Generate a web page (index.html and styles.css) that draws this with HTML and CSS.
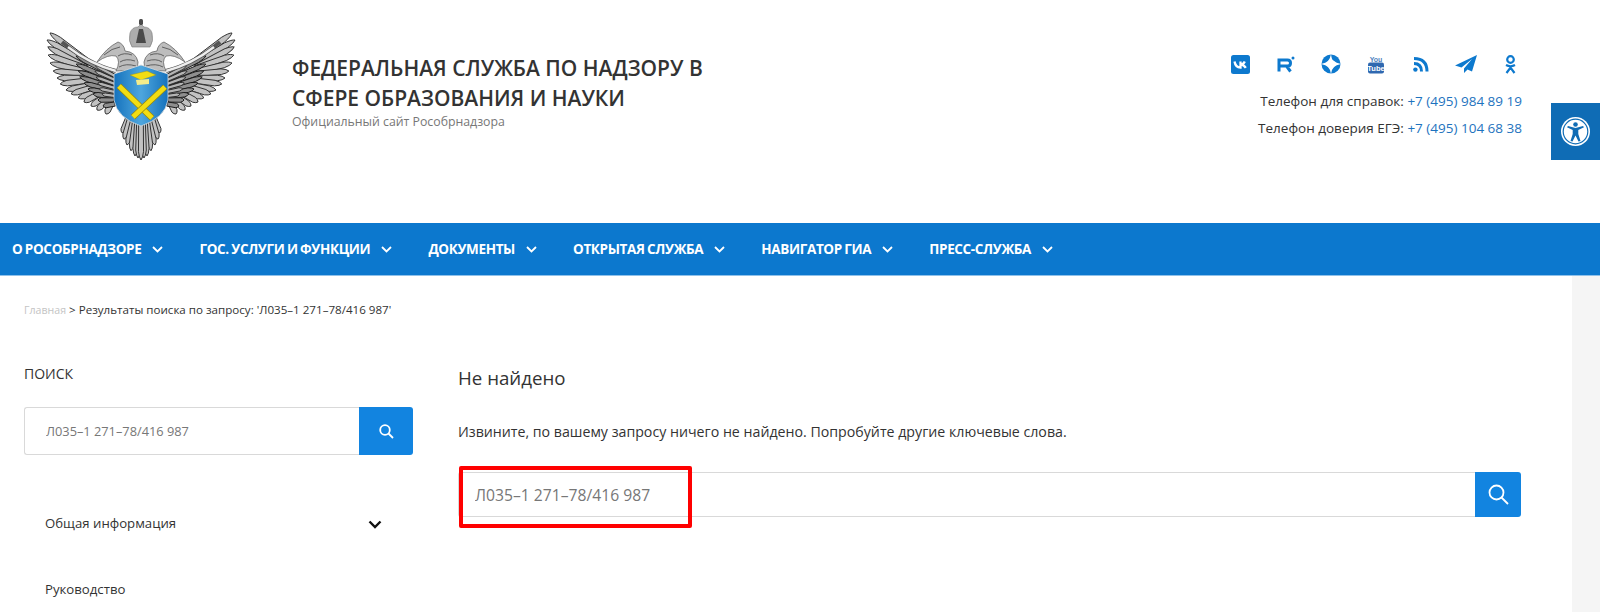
FILE: index.html
```html
<!DOCTYPE html>
<html lang="ru">
<head>
  <meta charset="UTF-8" />
  <title>Рособрнадзор - Поиск</title>
  <link rel="stylesheet" href="styles.css">
</head>
<body>
  <header class="header">
    <svg class="logo" viewBox="40 15 200 150" aria-label="Герб">
      <defs>
        <linearGradient id="shieldFill" x1="0" x2="1" y1="0" y2="0">
          <stop offset="0" stop-color="#1572bd" />
          <stop offset="0.5" stop-color="#4ea6dd" />
          <stop offset="1" stop-color="#1572bd" />
        </linearGradient>
        <path id="fe" d="M0 -2.6 L78 -2.8 Q95 -2 100 0 Q95 2 78 2.8 L0 2.6 Z" />
        <g id="primaries">
          <use href="#fe" transform="translate(90 63) rotate(216.9) scale(.5 1)" />
          <use href="#fe" transform="translate(88 64) rotate(210.3) scale(.475 1)" />
          <use href="#fe" transform="translate(86 67) rotate(207.8) scale(.43 1)" />
          <use href="#fe" transform="translate(86 68) rotate(198.9) scale(.4 1)" />
          <use href="#fe" transform="translate(88 72) rotate(193.3) scale(.39 1)" />
          <use href="#fe" transform="translate(88 74) rotate(184.9) scale(.35 1)" />
          <use href="#fe" transform="translate(92 78) rotate(180) scale(.35 1)" />
          <use href="#fe" transform="translate(92 80) rotate(172.9) scale(.32 1)" />
          <use href="#fe" transform="translate(97 84) rotate(169) scale(.316 1)" />
          <use href="#fe" transform="translate(97 86) rotate(162.9) scale(.27 1)" />
          <use href="#fe" transform="translate(102 90) rotate(161.6) scale(.25 1)" />
          <use href="#fe" transform="translate(102 92) rotate(151) scale(.206 1)" />
          <use href="#fe" transform="translate(107 95) rotate(145.5) scale(.194 1)" />
          <use href="#fe" transform="translate(110 98) rotate(137.3) scale(.177 1)" />
          <use href="#fe" transform="translate(113 100) rotate(116.6) scale(.157 1)" />
        </g>
        <g id="coverts">
          <use href="#fe" transform="translate(114 76) rotate(207.8) scale(.43 .8)" />
          <use href="#fe" transform="translate(114 80) rotate(202.8) scale(.41 .8)" />
          <use href="#fe" transform="translate(114 84) rotate(199.9) scale(.38 .8)" />
          <use href="#fe" transform="translate(114 88) rotate(197.9) scale(.36 .8)" />
          <use href="#fe" transform="translate(114 91) rotate(194.9) scale(.31 .8)" />
          <use href="#fe" transform="translate(114 94) rotate(190.9) scale(.265 .8)" />
          <use href="#fe" transform="translate(114 97) rotate(188.1) scale(.21 .8)" />
          <use href="#fe" transform="translate(114 100) rotate(180) scale(.16 .8)" />
          <use href="#fe" transform="translate(115 104) rotate(170.5) scale(.12 .8)" />
        </g>
        <g id="inner">
          <use href="#fe" transform="translate(115 76) rotate(208) scale(.22 .6)" />
          <use href="#fe" transform="translate(115 80) rotate(204) scale(.22 .6)" />
          <use href="#fe" transform="translate(115 84) rotate(200) scale(.2 .6)" />
          <use href="#fe" transform="translate(115 88) rotate(196) scale(.18 .6)" />
          <use href="#fe" transform="translate(115 92) rotate(192) scale(.16 .6)" />
          <use href="#fe" transform="translate(115 96) rotate(188) scale(.13 .6)" />
        </g>
        <g id="tail">
          <use href="#fe" transform="translate(128 118) rotate(111.8) scale(.16 .9)" />
          <use href="#fe" transform="translate(130 118) rotate(105.9) scale(.22 .9)" />
          <use href="#fe" transform="translate(133 120) rotate(103.5) scale(.257 .9)" />
          <use href="#fe" transform="translate(135 120) rotate(97.4) scale(.31 .9)" />
          <use href="#fe" transform="translate(137 122) rotate(93.4) scale(.34 .9)" />
          <use href="#fe" transform="translate(139 122) rotate(91.6) scale(.36 .9)" />
        </g>
        <g id="side">
          <use href="#primaries" class="primary" />
          <use href="#coverts" class="covert" />
          <use href="#inner" class="inner" />
          <use href="#tail" class="primary" />
          <path class="arm-edge" d="M62 42 Q88 64 116 71" />
          <path class="arm" d="M68 47 Q90 64 116 71" />
          <path class="head" d="M97 62 Q106 48 118 42 Q124 44 125 51 Q136 52 138 62 L137 70 L116 71 Q121 61 116 56 Q108 54 97 62 Z" />
          <path class="head-line" d="M104 55 Q112 48 120 47 M118 56 Q124 52 132 55 M120 62 Q126 58 135 61 M119 67 Q126 63 136 66" />
        </g>
      </defs>
      <use href="#side" />
      <use href="#side" transform="translate(282 0) scale(-1 1)" />
      <use href="#fe" class="primary" transform="translate(141 122) rotate(90) scale(.38 .9)" />
      <path class="crown" d="M130 33 Q132 27 138 27 L141 24 L144 27 Q150 27 152 33 Q154 41 150 47 L132 47 Q128 41 130 33 Z" />
      <rect class="crown-dark" x="139" y="19" width="4" height="6" rx="1.5" />
      <path class="crown-dark" d="M139 29 L143 29 L146 43 L136 43 Z" />
      <path class="shield" d="M114 74 L141 65 L168 74 L168 100 Q165 118 141 126 Q117 118 114 100 Z" />
      <line class="rod-edge" x1="119" y1="86" x2="152" y2="118" />
      <line class="rod" x1="119" y1="86" x2="152" y2="118" />
      <line class="rod-edge" x1="165" y1="87" x2="133" y2="117" />
      <line class="rod" x1="165" y1="87" x2="133" y2="117" />
      <path class="cap" d="M130 75 L147 71 L156 75 L141 80 Z" />
      <path class="cap-base" d="M136 80 L149 79 L149 84 L137 85 Z" />
    </svg>
    <div class="brand">
      <h1 class="brand-title">ФЕДЕРАЛЬНАЯ СЛУЖБА ПО НАДЗОРУ В<br>СФЕРЕ ОБРАЗОВАНИЯ И НАУКИ</h1>
      <p class="brand-sub">Официальный сайт Рособрнадзора</p>
    </div>
    <div class="contacts">
      <div class="socials">
        <a class="social">
          <svg width="19" height="19" viewBox="0 0 19 19"><rect class="ico-fill" width="19" height="19" rx="2.5" /><path class="vk-mark" d="M3.5 6.5 Q4.5 12.5 9.5 12.6 L9.5 6.5 M9.5 9.6 Q12.5 9.4 13.8 6.5 M9.5 9.4 Q13 9.8 14.8 12.8" /></svg>
        </a>
        <a class="social">
          <svg width="18" height="17" viewBox="0 0 18 17"><path class="ico-stroke" d="M2 15.5 V4 H10.5 Q13.5 4 13.5 7 Q13.5 10 10.5 10 H2.5 M9.5 10 L13.5 15.5" /><circle class="ico-fill" cx="16" cy="2" r="1.5" /></svg>
        </a>
        <a class="social">
          <svg width="20" height="20" viewBox="0 0 20 20"><circle class="ico-fill" cx="10" cy="10" r="9.5" /><path class="ico-white" d="M10 0 Q10.8 7 13 7 Q15 9.2 20 10 Q15 10.8 13 13 Q10.8 15 10 20 Q9.2 15 7 13 Q5 10.8 0 10 Q5 9.2 7 7 Q9.2 5 10 0 Z" /><circle class="ico-white" cx="10" cy="10" r="4" /></svg>
        </a>
        <a class="social">
          <svg width="16" height="19" viewBox="0 0 16 19"><text class="yt-you" x="8" y="6.5">You</text><rect class="yt-box" y="7.5" width="16" height="11" rx="2" /><text class="yt-tube" x="8" y="15.8">Tube</text></svg>
        </a>
        <a class="social">
          <svg width="16" height="15" viewBox="0 0 16 15"><circle class="ico-fill" cx="2.4" cy="12.6" r="2.2" /><path class="ico-stroke" d="M1 6.5 Q8.5 6.5 8.5 14.5 M1 1.5 Q14 1.5 14 14.5" /></svg>
        </a>
        <a class="social">
          <svg width="22" height="18" viewBox="0 0 22 18"><path class="ico-fill" d="M22 0 L0 10.5 L6.5 12.5 L17 4 L9 13.5 L9 18 L12.5 14.5 L17 16.5 Z" /></svg>
        </a>
        <a class="social">
          <svg width="11" height="19" viewBox="0 0 11 19"><circle class="ok-stroke" cx="5.5" cy="4.5" r="3.3" /><path class="ok-stroke" d="M1 10 Q5.5 12.5 10 10 M5.5 11 V12 M1.5 18 L5.5 12.5 L9.5 18" /></svg>
        </a>
      </div>
      <p class="phone">Телефон для справок: <a class="phone-link">+7 (495) 984 89 19</a></p>
      <p class="phone">Телефон доверия ЕГЭ: <a class="phone-link">+7 (495) 104 68 38</a></p>
    </div>
  </header>

  <nav class="nav">
    <a class="nav-item">О РОСОБРНАДЗОРЕ <svg class="nav-arrow" viewBox="0 0 11 7"><path d="M1 1 L5.5 5.5 L10 1" /></svg></a>
    <a class="nav-item">ГОС. УСЛУГИ И ФУНКЦИИ <svg class="nav-arrow" viewBox="0 0 11 7"><path d="M1 1 L5.5 5.5 L10 1" /></svg></a>
    <a class="nav-item">ДОКУМЕНТЫ <svg class="nav-arrow" viewBox="0 0 11 7"><path d="M1 1 L5.5 5.5 L10 1" /></svg></a>
    <a class="nav-item">ОТКРЫТАЯ СЛУЖБА <svg class="nav-arrow" viewBox="0 0 11 7"><path d="M1 1 L5.5 5.5 L10 1" /></svg></a>
    <a class="nav-item">НАВИГАТОР ГИА <svg class="nav-arrow" viewBox="0 0 11 7"><path d="M1 1 L5.5 5.5 L10 1" /></svg></a>
    <a class="nav-item">ПРЕСС-СЛУЖБА <svg class="nav-arrow" viewBox="0 0 11 7"><path d="M1 1 L5.5 5.5 L10 1" /></svg></a>
  </nav>

  <div class="content">
    <p class="crumbs"><a class="crumb-home">Главная</a> &gt; Результаты поиска по запросу: 'Л035–1 271–78/416 987'</p>
    <div class="columns">
      <aside class="sidebar">
        <h3 class="side-title">ПОИСК</h3>
        <form class="search search-small">
          <input class="search-input" value="Л035–1 271–78/416 987" />
          <button class="search-btn" type="button">
            <svg width="15" height="15" viewBox="0 0 15 15"><circle class="glass" cx="6" cy="6" r="4.8" /><path class="glass" d="M9.5 9.5 L14 14" /></svg>
          </button>
        </form>
        <ul class="side-menu">
          <li class="side-item">Общая информация
            <svg class="side-arrow" viewBox="0 0 14 9"><path d="M1.5 1.5 L7 7 L12.5 1.5" /></svg>
          </li>
          <li class="side-item">Руководство</li>
        </ul>
      </aside>
      <main class="main">
        <h2 class="main-title">Не найдено</h2>
        <p class="main-text">Извините, по вашему запросу ничего не найдено. Попробуйте другие ключевые слова.</p>
        <form class="search search-big">
          <input class="search-input" value="Л035–1 271–78/416 987" />
          <button class="search-btn" type="button">
            <svg width="21" height="21" viewBox="0 0 21 21"><circle class="glass" cx="8.5" cy="8.5" r="7" /><path class="glass" d="M13.5 13.5 L20 20" /></svg>
          </button>
          <div class="annotation"></div>
        </form>
      </main>
    </div>
  </div>

  <a class="a11y">
    <svg width="29" height="29" viewBox="0 0 29 29">
      <circle class="a11y-disc" cx="14.5" cy="14.5" r="14.5" />
      <circle class="a11y-ring" cx="14.5" cy="14.5" r="12.3" />
      <circle class="a11y-man" cx="14.5" cy="7.5" r="2.3" />
      <path class="a11y-man" d="M6 10.3 L7 9 L14.5 11 L22 9 L23 10.3 L17.3 13 L17.3 17 L19.5 24 L17.5 24.5 L14.5 18.5 L11.5 24.5 L9.5 24 L11.7 17 L11.7 13 Z" />
    </svg>
  </a>
</body>
</html>
```

FILE: styles.css
```css
html, body {
  margin: 0;
  height: 612px;
  overflow: hidden;
}
body {
  background-color: #f5f5f5;
  font-family: "Open Sans", Arial, sans-serif;
  color: #333;
}
p, h1, h2, h3, ul {
  margin: 0;
  padding: 0;
}

/* header */
.header {
  display: flex;
  height: 223px;
  background: #fff;
  box-sizing: border-box;
  padding: 15px 66px 0 40px;
}
.logo {
  width: 200px;
  height: 150px;
  flex: none;
  filter: blur(0.4px);
}
.brand {
  margin-left: 52px;
  padding-top: 38px;
}
.brand-title {
  font-size: 21px;
  line-height: 30px;
  font-weight: 600;
  color: #333;
}
.brand-sub {
  font-size: 12.3px;
  line-height: 18px;
  color: #777;
}
.contacts {
  margin-left: auto;
  padding-top: 39px;
  text-align: right;
}
.socials {
  display: flex;
  margin: 0 1px 14px 0;
}
.social {
  width: 45px;
  height: 20px;
  display: flex;
  align-items: center;
  justify-content: center;
}
.phone {
  font-size: 13.5px;
  line-height: 26.5px;
  padding-right: 12px;
}
.phone-link {
  color: #1e73be;
}

/* social icons */
.ico-fill { fill: #0d79ce; }
.ico-white { fill: #fff; }
.ico-stroke { fill: none; stroke: #0d79ce; stroke-width: 3; }
.vk-mark { fill: none; stroke: #fff; stroke-width: 2.3; }
.ok-stroke { fill: none; stroke: #0d79ce; stroke-width: 2.2; }
.yt-you { font: bold 7px "Liberation Sans", sans-serif; fill: #4e7fc0; text-anchor: middle; }
.yt-box { fill: #2f68b0; }
.yt-tube { font: bold 7.5px "Liberation Sans", sans-serif; fill: #fff; text-anchor: middle; }

/* logo parts */
#fe { vector-effect: non-scaling-stroke; }
.primary { fill: #c2c2c2; stroke: #333; stroke-width: 1; }
.covert { fill: #8e8e8e; stroke: #1c1c1c; stroke-width: 1; }
.inner { fill: #b4b4b4; stroke: #222; stroke-width: 0.9; }
.arm-edge { fill: none; stroke: #555; stroke-width: 4; }
.arm { fill: none; stroke: #eee; stroke-width: 2.4; }
.head { fill: #bdbdbd; stroke: #666; stroke-width: 0.8; }
.head-line { fill: none; stroke: #555; stroke-width: 0.9; }
.crown { fill: #adadad; stroke: #777; stroke-width: 0.6; }
.crown-dark { fill: #4a4a4a; }
.shield { fill: url(#shieldFill); stroke: #d8d8d8; stroke-width: 0.8; }
.rod-edge { stroke: #94890f; stroke-width: 6.4; }
.rod { stroke: #f2dd12; stroke-width: 4.8; }
.cap { fill: #f2dd12; stroke: #94890f; stroke-width: 0.4; }
.cap-base { fill: #f5ec8a; }

/* nav */
.nav {
  display: flex;
  gap: 36px;
  height: 53px;
  align-items: center;
  padding-left: 12px;
  background: #0c78ce;
  border-bottom: 1px solid #8fc1ea;
  box-sizing: border-box;
}
.nav-item {
  display: flex;
  align-items: center;
  gap: 11px;
  font-size: 13.5px;
  font-weight: 700;
  letter-spacing: -0.35px;
  word-spacing: -0.7px;
  color: #fff;
  white-space: nowrap;
}
.nav-arrow {
  width: 11px;
  height: 7px;
}
.nav-arrow path {
  fill: none;
  stroke: #fff;
  stroke-width: 1.8;
}

/* content */
.content {
  width: 1572px;
  height: 336px;
  background: #fff;
  box-sizing: border-box;
  padding: 26px 0 0 24px;
}
.crumbs {
  font-size: 11.6px;
  line-height: 16px;
  color: #333;
}
.crumb-home {
  font-size: 10.6px;
  color: #c4c4c4;
}
.columns {
  display: flex;
  margin-top: 46px;
}
.sidebar {
  width: 389px;
  flex: none;
}
.side-title {
  font-size: 14px;
  font-weight: 400;
  line-height: 20px;
  color: #333;
}
.search {
  position: relative;
  display: flex;
}
.search-input {
  flex: 1;
  min-width: 0;
  box-sizing: border-box;
  height: 100%;
  border: 1px solid #d9d9d9;
  border-right: 0;
  border-radius: 3px 0 0 3px;
  background: #fff;
  font-family: "Open Sans", Arial, sans-serif;
  color: #777;
  outline: none;
}
.search-btn {
  border: 0;
  padding: 0;
  background: #1284e0;
  border-radius: 0 3px 3px 0;
  display: flex;
  align-items: center;
  justify-content: center;
}
.glass {
  fill: none;
  stroke: #fff;
  stroke-width: 1.8;
}
.search-small {
  height: 48px;
  margin-top: 23px;
}
.search-small .search-input {
  padding-left: 21px;
  font-size: 12.8px;
}
.search-small .search-btn {
  width: 54px;
}
.side-menu {
  list-style: none;
  margin-top: 49px;
}
.side-item {
  position: relative;
  font-size: 13.2px;
  line-height: 38px;
  height: 38px;
  padding-left: 21px;
  margin-bottom: 28px;
}
.side-arrow {
  position: absolute;
  left: 344px;
  top: 16px;
  width: 14px;
  height: 9px;
}
.side-arrow path {
  fill: none;
  stroke: #111;
  stroke-width: 2.4;
}
.main {
  width: 1063px;
  margin-left: 45px;
}
.main-title {
  font-size: 18.7px;
  font-weight: 400;
  line-height: 28px;
  color: #333;
}
.main-text {
  font-size: 14.2px;
  line-height: 20px;
  margin-top: 30px;
}
.search-big {
  height: 45px;
  margin-top: 30px;
}
.search-big .search-input {
  padding-left: 16px;
  font-size: 15.7px;
}
.search-big .search-btn {
  width: 46px;
}
.annotation {
  position: absolute;
  left: 1px;
  top: -6px;
  width: 233px;
  height: 62px;
  box-sizing: border-box;
  border: 4px solid #f00;
  border-radius: 2px;
}

/* accessibility tab */
.a11y {
  position: absolute;
  left: 1551px;
  top: 103px;
  width: 49px;
  height: 57px;
  background: #0f6cb5;
  display: flex;
  align-items: center;
  justify-content: center;
  padding-right: 1px;
  box-sizing: border-box;
}
.a11y-disc { fill: #fff; }
.a11y-ring { fill: #fff; stroke: #0f6cb5; stroke-width: 1.2; }
.a11y-man { fill: #0f6cb5; }
```
